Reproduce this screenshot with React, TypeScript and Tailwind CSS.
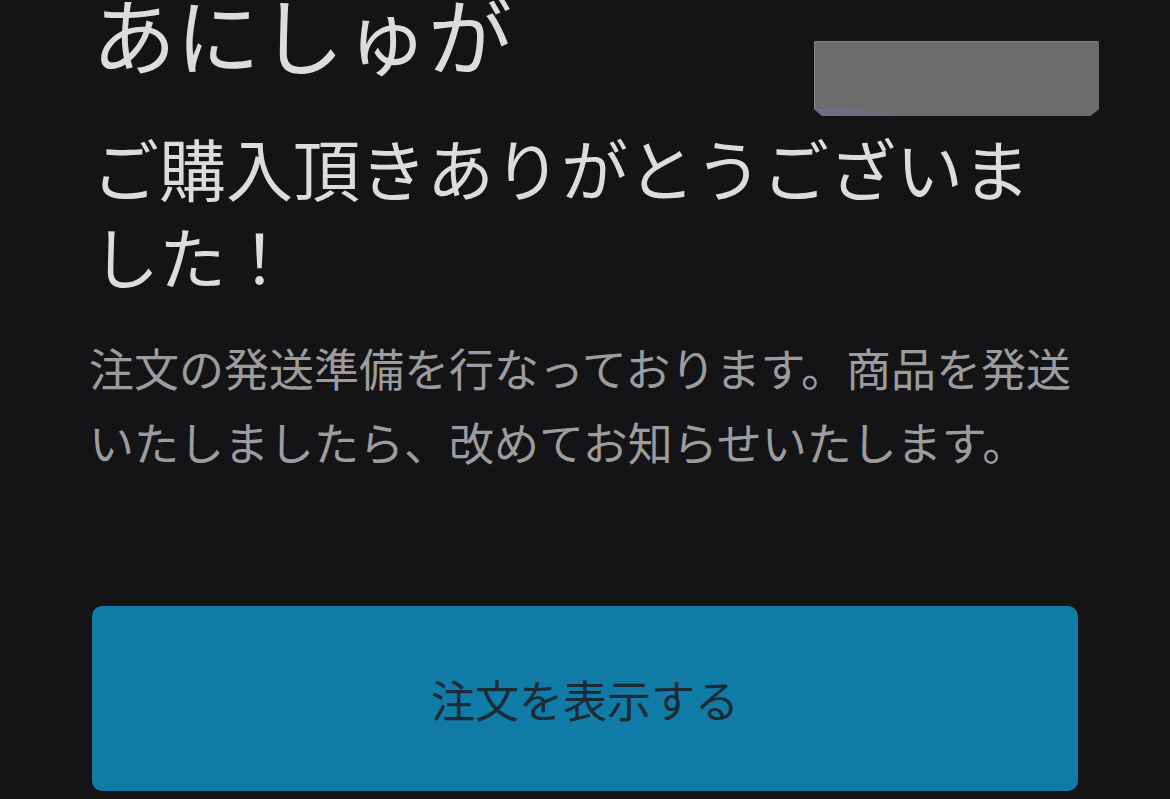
import React from 'react';

const JP = '[font-family:"Noto_Sans_CJK_JP","Noto_Sans_CJK_SC",sans-serif]';

const RedactionBlock: React.FC = () => (
  <div className="absolute left-[814px] top-[41px] w-[285px] h-[75px]">
    <div className="w-full h-full bg-[#6c6c6d] border-t border-l border-[#858587] rounded-t-[2px] [clip-path:polygon(0_0,100%_0,100%_91%,97%_100%,3%_100%,0_91%)]" />
    <div className="absolute left-0 bottom-0 w-[90px] h-[7px] bg-gradient-to-r from-[#6a70a6] to-transparent opacity-60 [clip-path:polygon(0_0,100%_0,100%_100%,8%_100%)]" />
  </div>
);

export default function App() {
  return (
    <div className={`relative w-[1170px] h-[799px] overflow-hidden bg-[#141416] ${JP}`}>
      <RedactionBlock />
      <div className="flex flex-col px-[92px]">
        <h1 className="mt-[-9px] text-[84px] leading-none text-[#dcdcdc] font-normal">あにしゅが</h1>
        <h2 className="mt-[48px] text-[67px] leading-[88px] text-[#dcdcdc] font-normal">
          ご購入頂きありがとうございました！
        </h2>
        <p className="mt-[32px] -ml-[3px] w-[992px] text-[45px] leading-[74px] text-[#9c9c9e]">
          注文の発送準備を行なっております。商品を発送いたしましたら、改めてお知らせいたします。
        </p>
        <button className="mt-[127px] h-[185px] w-full rounded-[10px] bg-[#117ba7] text-[44px] text-[#1a2b35]">
          注文を表示する
        </button>
      </div>
    </div>
  );
}
